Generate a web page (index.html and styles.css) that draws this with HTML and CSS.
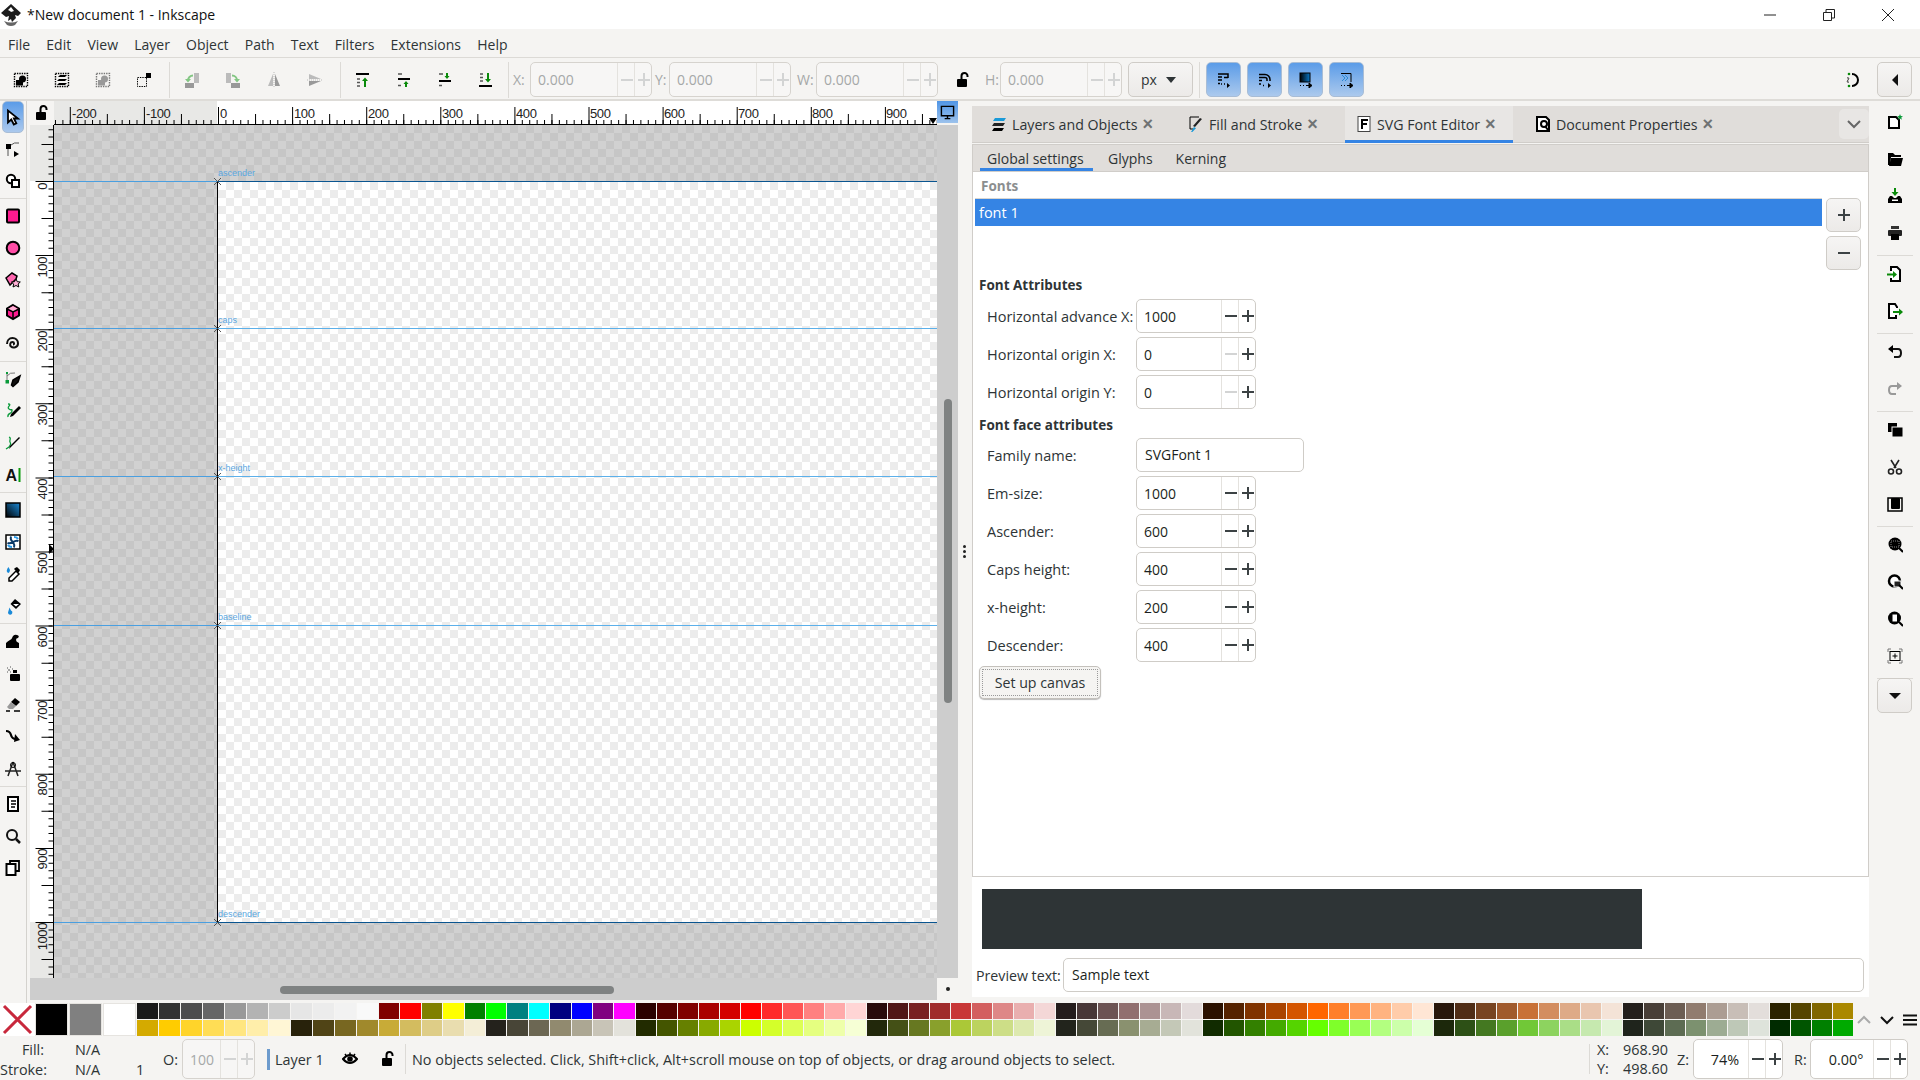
FILE: index.html
```html
<!DOCTYPE html>
<html lang="en">
<head>
<meta charset="utf-8">
<title>New document 1 - Inkscape</title>
<link rel="stylesheet" href="styles.css">
</head>
<body>
<svg class="defs" width="0" height="0">
  <symbol id="lock" viewBox="0 0 16 16"><rect x="2" y="7" width="10" height="8" rx="1"/><path d="M6.5 7V4a3 3 0 0 1 6 0v1" fill="none" stroke="#000" stroke-width="2"/></symbol>
  <symbol id="dots" viewBox="0 0 16 16"><rect x="1.5" y="1.5" width="13" height="13" fill="none" stroke="currentColor" stroke-width="1.4" stroke-dasharray="1.4 1"/></symbol>
  <symbol id="marg" viewBox="0 0 16 16"><path d="M2 2h10v4M8 5.5h4M2 5h4M2 8h4M2 11.500h2M5 12h1M8 12h1" fill="none" stroke="#000" stroke-width="1.500"/><path d="M8 13.500h5M11 11l3 2.500-3 2.500z"/></symbol>
  <symbol id="xm" viewBox="0 0 9 9"><path d="M1 1l7 7M8 1l-7 7" stroke="#555" fill="none"/></symbol>
</svg>
<div class="app">
  <header class="titlebar">
    <svg class="logo" viewBox="0 0 22 24"><path d="M11 1l10 9-3 3-3-1 1 3-4 4-1-3-3 2 1-5-3 1-5-4z" fill="#1c1c1c"/><path d="M8 7l3-3 3 4-3 1-1-1z" fill="#fff"/><path d="M4 18q7 3 14 0l-3 4q-4 2-8 0z" fill="#666"/></svg>
    <span class="title">*New document 1 - Inkscape</span>
    <div class="winctl">
      <svg viewBox="0 0 14 14"><path d="M1 7h12" stroke="#222" fill="none"/></svg>
      <svg viewBox="0 0 14 14"><path d="M1.500 4.500h8v8h-8zM4 4.500V1.500h8.500V10H9.500" stroke="#222" fill="none"/></svg>
      <svg viewBox="0 0 14 14"><path d="M1 1l12 12M13 1L1 13" stroke="#222" fill="none"/></svg>
    </div>
  </header>
  <nav class="menubar">
    <span>File</span><span>Edit</span><span>View</span><span>Layer</span><span>Object</span><span>Path</span><span>Text</span><span>Filters</span><span>Extensions</span><span>Help</span>
  </nav>
  <div class="toolbar">
    <div class="ti first"><svg viewBox="0 0 16 16" color="#000"><use href="#dots"/><circle cx="9.500" cy="7" r="3.500"/><rect x="3" y="8" width="7" height="5.500"/></svg></div>
    <div class="ti"><svg viewBox="0 0 16 16" color="#000"><use href="#dots"/><path d="M4 5l2-2h7l-2 2zM3 9l2-2h8l-2 2zM3 13l2-2h8l-2 2z"/></svg></div>
    <div class="ti"><svg viewBox="0 0 16 16" color="#777" fill="#999"><use href="#dots"/><circle cx="9.500" cy="7" r="3.500"/><rect x="3" y="8" width="7" height="5.500"/></svg></div>
    <div class="ti"><svg viewBox="0 0 16 16" color="#000"><rect x="1.500" y="5.500" width="9" height="9" fill="none" stroke="#000" stroke-dasharray="1.400 1"/><rect x="10" y="1" width="5" height="5"/></svg></div>
    <i class="vsep"></i>
    <div class="ti"><svg viewBox="0 0 16 16"><rect x="10" y="1" width="5" height="10" fill="#bbb"/><rect x="1" y="11" width="9" height="5" fill="#999"/><path d="M9 3.500A5 5 0 0 0 4 8.500" fill="none" stroke="#83c683" stroke-width="2"/><path d="M1 7h6l-3 3.500z" fill="#83c683"/></svg></div>
    <div class="ti"><svg viewBox="0 0 16 16"><rect x="1" y="1" width="5" height="10" fill="#bbb"/><rect x="6" y="11" width="9" height="5" fill="#999"/><path d="M7 3.500A5 5 0 0 1 12 8.500" fill="none" stroke="#83c683" stroke-width="2"/><path d="M9 7h6l-3 3.500z" fill="#83c683"/></svg></div>
    <div class="ti"><svg viewBox="0 0 16 16"><path d="M7 2L2 14h5z" fill="#bbb"/><path d="M9 2l5 12H9z" fill="#999"/><path d="M8 0v16" stroke="#bbb" stroke-dasharray="1 1"/></svg></div>
    <div class="ti"><svg viewBox="0 0 16 16"><path d="M2 2l12 5H2z" fill="#bbb"/><path d="M2 9h12L2 14z" fill="#999"/><path d="M0 8h16" stroke="#bbb" stroke-dasharray="1 1"/></svg></div>
    <i class="vsep"></i>
    <div class="ti"><svg viewBox="0 0 16 16"><path d="M1 2h13" stroke="#000" stroke-width="2"/><path d="M2 7h3M2 10.500h3M2 14h3" stroke="#555" stroke-width="1.500"/><path d="M10 15V8" stroke="#0a8a0a" stroke-width="2"/><path d="M7 9l3-3.500L13 9z" fill="#0a8a0a"/></svg></div>
    <div class="ti"><svg viewBox="0 0 16 16"><path d="M2 2h4M2 13.500h3" stroke="#555" stroke-width="1.500"/><path d="M2 7h12" stroke="#000" stroke-width="2"/><path d="M10 15v-4" stroke="#0a8a0a" stroke-width="2"/><path d="M7.500 12l2.500-3 2.500 3z" fill="#0a8a0a"/></svg></div>
    <div class="ti"><svg viewBox="0 0 16 16"><path d="M2 2h4M2 13.500h3" stroke="#555" stroke-width="1.500"/><path d="M2 9h12" stroke="#000" stroke-width="2"/><path d="M10 1v4" stroke="#0a8a0a" stroke-width="2"/><path d="M7.500 4l2.500 3 2.500-3z" fill="#0a8a0a"/></svg></div>
    <div class="ti"><svg viewBox="0 0 16 16"><path d="M1 14h13" stroke="#000" stroke-width="2"/><path d="M2 2h3M2 5.500h3M2 9h3" stroke="#555" stroke-width="1.500"/><path d="M10 1v7" stroke="#0a8a0a" stroke-width="2"/><path d="M7 7l3 3.500L13 7z" fill="#0a8a0a"/></svg></div>
    <i class="vsep fieldsep"></i>
    <label class="tl lx">X:</label>
    <div class="tf"><span class="tv">0.000</span><b class="m"></b><b class="p"></b></div>
    <label class="tl ly">Y:</label>
    <div class="tf"><span class="tv">0.000</span><b class="m"></b><b class="p"></b></div>
    <label class="tl lw">W:</label>
    <div class="tf"><span class="tv">0.000</span><b class="m"></b><b class="p"></b></div>
    <svg class="tlock" viewBox="0 0 16 16"><use href="#lock"/></svg>
    <label class="tl hl">H:</label>
    <div class="tf"><span class="tv">0.000</span><b class="m"></b><b class="p"></b></div>
    <div class="combo"><span>px</span><i></i></div>
    <i class="vsep"></i>
    <div class="bb"><svg viewBox="0 0 16 16"><use href="#marg"/></svg></div>
    <div class="bb"><svg viewBox="0 0 16 16"><path d="M2 2.500h6a5 5 0 0 1 5 5V9M2 5.500h6a2 2 0 0 1 2 2V9M2 8.500h3M2 12h2M6 13.500h1" fill="none" stroke="#000" stroke-width="1.500"/><path d="M8 13h5M11 11l3 2.500-3 2.500z"/></svg></div>
    <div class="bb"><svg viewBox="0 0 16 16"><defs><linearGradient id="gb"><stop offset="0" stop-color="#000"/><stop offset="1" stop-color="#0a78c8"/></linearGradient></defs><rect x="2" y="1" width="10" height="9" fill="url(#gb)" stroke="#000"/><path d="M2 13.500h1M5 13.500h1M8 13.500h5M11 11l3 2.500-3 2.500z" stroke="#000"/></svg></div>
    <div class="bb"><svg viewBox="0 0 16 16"><path d="M2 1.500h10V10" fill="none" stroke="#000"/><path d="M3 3l3 3-3 3M6 3l3 3-3 3" fill="none" stroke="#2a8ad4"/><path d="M2 13.500h1M5 13.500h1M8 13.500h5M11 11l3 2.500-3 2.500z" stroke="#000"/></svg></div>
    <svg class="snap" viewBox="0 0 16 16"><path d="M7 2a6 6 0 1 1 0 12" fill="none" stroke="#000" stroke-width="2"/><circle cx="4" cy="2" r="1.300" fill="#0a8a0a"/><circle cx="4" cy="14" r="1.300" fill="#0a8a0a"/><path d="M2 6q3-1 1 2t1 2" fill="none" stroke="#333"/></svg>
    <div class="sidebtn"><i class="tri-l"></i></div>
  </div>

  <main class="main">
    <aside class="tools">
      <div class="tb on"><svg viewBox="0 0 16 16"><path d="M3 1.500v12l3.300-3 2.500 5 2.500-1.200-2.400-4.800H13z" fill="#fff" stroke="#000" stroke-width="1.800"/></svg></div>
      <div class="tb"><svg viewBox="0 0 16 16"><rect x="1" y="3" width="5" height="5"/><path d="M6 4q3-3 8-2M3 8v7" fill="none" stroke="#555"/><path d="M9 10l5 3-5 3z"/></svg></div>
      <div class="tb"><svg viewBox="0 0 16 16"><circle cx="6" cy="6" r="4.200" fill="#fff" stroke="#000" stroke-width="2"/><rect x="7" y="7" width="7" height="7" fill="#fff" stroke="#000" stroke-width="2"/></svg></div>
      <i class="hsep"></i>
      <div class="tb"><svg viewBox="0 0 16 16"><rect x="2" y="1.500" width="12" height="13" rx="1" fill="#ff1a90" stroke="#000" stroke-width="2"/></svg></div>
      <div class="tb"><svg viewBox="0 0 16 16"><circle cx="8" cy="8" r="6.300" fill="#ff4da6" stroke="#000" stroke-width="2"/></svg></div>
      <div class="tb"><svg viewBox="0 0 16 16"><path d="M1 6l6-5 5 3-1 3-6 6z" fill="#ff66b0" stroke="#000" stroke-width="1.500"/><path d="M11 7l1.300 2.700 3 .3-2.200 2 .7 3-2.800-1.500L8 15l.7-3-2.200-2 3-.3z" fill="#ffb0d5" stroke="#000"/></svg></div>
      <div class="tb"><svg viewBox="0 0 16 16"><path d="M8 1l6 3.500v7L8 15l-6-3.500v-7z" fill="#ff1a90" stroke="#000" stroke-width="2"/><path d="M3 5l5 3 5-3-5-3z" fill="#ffb0d5"/><path d="M2 5l6 3 6-3M8 8v7" stroke="#000" fill="none" stroke-width="1.500"/></svg></div>
      <div class="tb"><svg viewBox="0 0 16 16"><path d="M8 8.500c1.500 0 1.500-2.500-.5-2.500C5 6 4.500 9 6 10.500c2 2 7 1 7-3C13 4 10.500 2 7.500 2 4 2 2 5 2 8" fill="none" stroke="#111" stroke-width="2"/></svg></div>
      <i class="hsep"></i>
      <div class="tb"><svg viewBox="0 0 16 16"><rect x="0.500" y="9" width="3.500" height="3.500" fill="#0a9a3a"/><rect x="1" y="1" width="2" height="2" fill="#0a9a3a"/><path d="M2 3v6M2 5q3-4 8-3" stroke="#777" fill="none"/><path d="M15 5l-2 6-5 4.500-1.500-1.500L8 9z" stroke="#000" stroke-width="1.500" fill="#111"/></svg></div>
      <div class="tb"><svg viewBox="0 0 16 16"><path d="M3 1c5 0-2 3 1 5s3-1 3 2-5 2-4 6" fill="none" stroke="#0a9a3a" stroke-width="1.300"/><path d="M14 3l2 2-8 8-3 1 1-3z"/></svg></div>
      <div class="tb"><svg viewBox="0 0 16 16"><path d="M4 2c3 1 0 3 1 5s1 2-1 5l-3 2" fill="none" stroke="#0a9a3a" stroke-width="1.300"/><path d="M15 3L6 12l-2 2 1-3 9-9z"/></svg></div>
      <div class="tb"><svg viewBox="0 0 16 16"><text x="0.500" y="13.500" class="atext">A</text><rect x="13.500" y="1" width="2" height="14" fill="#0a9a0a"/></svg></div>
      <i class="hsep"></i>
      <div class="tb"><svg viewBox="0 0 16 16"><defs><linearGradient id="gg" x1="0" y1="1" x2="1" y2="0"><stop offset="0" stop-color="#000"/><stop offset="1" stop-color="#1a8ad8"/></linearGradient></defs><rect x="1" y="1" width="14" height="14" fill="url(#gg)" stroke="#000" stroke-width="1.500"/></svg></div>
      <div class="tb"><svg viewBox="0 0 16 16"><rect x="1" y="1" width="14" height="14" fill="#fff" stroke="#000" stroke-width="1.500"/><path d="M8 8Q5 6 6 2.500M8 8q3-2 5.500-1M8 8q2 3 1 5.500M8 8q-3 2-5.500 1" fill="none" stroke="#0a3a68" stroke-width="2"/><path d="M9 3q3 0 4 2M3 11q1 2 4 2" fill="none" stroke="#2a9ae8" stroke-width="2"/></svg></div>
      <div class="tb"><svg viewBox="0 0 16 16"><path d="M3.500 1q-3 4-1 5.500T5 4z" fill="#1a8ad8"/><path d="M11 5l3 3-7 7H4v-3z" fill="#fff" stroke="#000" stroke-width="1.500"/><path d="M10 2l2-1 3 3-1 2 -1 1-4-4z"/></svg></div>
      <div class="tb"><svg viewBox="0 0 16 16"><path d="M3 14.500a2.200 2.200 0 1 0 3-2L4.500 9.500z" fill="#1a8ad8"/><path d="M10 1l6 5-5 5-5.500-5z"/><path d="M8 6l3 2.500L14 6z" fill="#fff"/></svg></div>
      <i class="hsep"></i>
      <div class="tb"><svg viewBox="0 0 16 16"><path d="M1 15V10q2-2 4-3t3-4q2-2 4-1 3 1 1 3-2 0-2 2 0 2 3 3v5z"/></svg></div>
      <div class="tb"><svg viewBox="0 0 16 16"><path d="M2 3h1M5 2h1M3 5h2M7 4h1M2 7h1M5 7h1" stroke="#888" stroke-width="1.500"/><rect x="5" y="9" width="10" height="7" rx="1"/><rect x="8" y="5" width="4" height="3"/></svg></div>
      <div class="tb"><svg viewBox="0 0 16 16"><path d="M10 1l5 4-4 4-5-4z"/><path d="M6 5l5 4-3 3H4l-2-2z" fill="#999"/><path d="M1 14h4M9 14h6" stroke="#000" stroke-width="1.500"/></svg></div>
      <div class="tb"><svg viewBox="0 0 16 16"><path d="M1 2q4 0 5 4t5 4" fill="none" stroke="#000" stroke-width="2.200"/><path d="M10 5l5 6-6 2z"/></svg></div>
      <div class="tb"><svg viewBox="0 0 16 16"><path d="M8 1L3 15M8 1l5 14M0 10h16" fill="none" stroke="#222" stroke-width="1.500"/><circle cx="8" cy="4" r="2.500" fill="none" stroke="#000"/></svg></div>
      <i class="hsep"></i>
      <div class="tb"><svg viewBox="0 0 16 16"><path d="M3 1h10v14H3z" fill="#fff" stroke="#000" stroke-width="2"/><path d="M6 5h5M6 8h5M6 11h4" stroke="#000" stroke-width="1.300"/></svg></div>
      <div class="tb"><svg viewBox="0 0 16 16"><circle cx="7" cy="7" r="5" fill="none" stroke="#111" stroke-width="2"/><path d="M11 11l4 4" stroke="#111" stroke-width="2.500"/></svg></div>
      <div class="tb"><svg viewBox="0 0 16 16"><path d="M5 3V1h9v10h-3" fill="none" stroke="#000" stroke-width="1.800"/><rect x="1.500" y="4" width="9" height="11" fill="#fff" stroke="#000" stroke-width="2"/></svg></div>
    </aside>

    <section class="workspace">
      <div class="corner"><svg viewBox="0 0 16 16"><use href="#lock"/></svg></div>
      <svg class="hruler" width="883" height="24">
        <rect width="163" height="24" fill="#e8e8e6"/>
        <line x1="0.980" x2="883" y1="21.500" y2="21.500" class="tk" stroke-width="5" stroke-dasharray="1 6.410"/>
        <line x1="52.850" x2="883" y1="18.500" y2="18.500" class="tk" stroke-width="11" stroke-dasharray="1 73.100"/>
        <line x1="15.800" x2="883" y1="15" y2="15" class="tk" stroke-width="18" stroke-dasharray="1 73.100"/>
        <line x1="0" x2="883" y1="23.500" y2="23.500" class="tk" stroke-width="1"/>
        <g class="rt"><text x="18" y="17">-200</text><text x="92" y="17">-100</text><text x="166" y="17">0</text><text x="240" y="17">100</text><text x="314" y="17">200</text><text x="388" y="17">300</text><text x="462" y="17">400</text><text x="536" y="17">500</text><text x="610" y="17">600</text><text x="684" y="17">700</text><text x="758" y="17">800</text><text x="832" y="17">900</text></g>
        <path d="M875 17h8l-4 6z"/>
      </svg>
      <div class="zoomcorr"><svg viewBox="0 0 16 16"><path d="M1.500 1.500h13v10h-13zM5 14.500h6M8 12v2" fill="none" stroke="#000" stroke-width="1.500"/></svg></div>
      <svg class="vruler" width="24" height="853">
        <rect width="24" height="56" fill="#e8e8e6"/>
        <rect y="797" width="24" height="56" fill="#e8e8e6"/>
        <line x1="21" x2="21" y1="4.130" y2="853" class="tk" stroke-width="5" stroke-dasharray="1 6.410"/>
        <line x1="17" x2="17" y1="18.950" y2="853" class="tk" stroke-width="11" stroke-dasharray="1 73.100"/>
        <line x1="14" x2="14" y1="56" y2="853" class="tk" stroke-width="17" stroke-dasharray="1 73.100"/>
        <line x1="23.500" x2="23.500" y1="0" y2="853" class="tk" stroke-width="1"/>
        <g class="rt">
          <text transform="translate(17 58) rotate(-90)" text-anchor="end">0</text>
          <text transform="translate(17 132) rotate(-90)" text-anchor="end">100</text>
          <text transform="translate(17 206) rotate(-90)" text-anchor="end">200</text>
          <text transform="translate(17 280) rotate(-90)" text-anchor="end">300</text>
          <text transform="translate(17 354) rotate(-90)" text-anchor="end">400</text>
          <text transform="translate(17 428) rotate(-90)" text-anchor="end">500</text>
          <text transform="translate(17 502) rotate(-90)" text-anchor="end">600</text>
          <text transform="translate(17 576) rotate(-90)" text-anchor="end">700</text>
          <text transform="translate(17 650) rotate(-90)" text-anchor="end">800</text>
          <text transform="translate(17 724) rotate(-90)" text-anchor="end">900</text>
          <text transform="translate(17 798) rotate(-90)" text-anchor="end">1000</text>
        </g>
        <path d="M19 419l5 5-5 5z"/>
      </svg>
      <div class="canvas">
        <div class="page"></div>
        <i class="guide g-a"></i><i class="guide g-c"></i><i class="guide g-x"></i><i class="guide g-b"></i><i class="guide g-d"></i>
        <span class="gl l-a">ascender</span><span class="gl l-c">caps</span><span class="gl l-x">x-height</span><span class="gl l-b">baseline</span><span class="gl l-d">descender</span>
        <svg class="xm x-a"><use href="#xm"/></svg><svg class="xm x-c"><use href="#xm"/></svg><svg class="xm x-x"><use href="#xm"/></svg><svg class="xm x-b"><use href="#xm"/></svg><svg class="xm x-d"><use href="#xm"/></svg>
      </div>
      <div class="vscroll"><i></i></div>
      <div class="hscroll"><i></i></div>
      <div class="sc-corner"><i></i></div>
    </section>

    <div class="gutter"><i></i><i></i><i></i></div>

    <section class="dock">
      <div class="tabs">
        <div class="tab t1"><svg viewBox="0 0 16 16"><path d="M4 2h11l-2 3H2z" fill="#1a9ad8"/><path d="M3 7h11l-2 3H1z" fill="#222"/><path d="M3 12h10l-2 3H1z"/></svg><span>Layers and Objects</span><em>×</em></div>
        <div class="tab t2"><svg viewBox="0 0 16 16"><path d="M11 1H2v12h3" fill="none" stroke="#000"/><path d="M14 3L7 11l-2-1 7-8z" fill="#222"/><path d="M6 11l-3 5 1 .3 4-4z" fill="#1a9ad8"/></svg><span>Fill and Stroke</span><em>×</em></div>
        <div class="tab t3 act"><svg viewBox="0 0 16 16"><rect x="2" y="0.500" width="12" height="15" fill="#fff" stroke="#444"/><path d="M5 3h7v2H7v2h4v2H7v4H5z"/></svg><span>SVG Font Editor</span><em>×</em></div>
        <div class="tab t4"><svg viewBox="0 0 16 16"><path d="M2 1h9l3 3v11H2z" fill="#fff" stroke="#000" stroke-width="2"/><circle cx="9" cy="8" r="3" fill="none" stroke="#000" stroke-width="2"/><path d="M10 10l3 4" stroke="#000" stroke-width="2"/></svg><span>Document Properties</span><em>×</em></div>
        <div class="tabmenu"><svg viewBox="0 0 16 16"><path d="M2 5l6 6 6-6" fill="none" stroke="#666" stroke-width="2"/></svg></div>
      </div>
      <div class="nb">
        <div class="subtabs"><span class="sel">Global settings</span><span>Glyphs</span><span>Kerning</span></div>
        <div class="scroller">
          <div class="fonts">
            <div class="list">
              <div class="lh">Fonts</div>
              <div class="lrow">font 1</div>
            </div>
            <div class="addrem"><div class="sq"><b class="p dark"></b></div><div class="sq"><b class="m dark"></b></div></div>
          </div>
          <h3>Font Attributes</h3>
          <div class="row"><label>Horizontal advance X:</label><div class="spin"><span>1000</span><b class="m dark"></b><b class="p dark"></b></div></div>
          <div class="row"><label>Horizontal origin X:</label><div class="spin"><span>0</span><b class="m"></b><b class="p dark"></b></div></div>
          <div class="row"><label>Horizontal origin Y:</label><div class="spin"><span>0</span><b class="m"></b><b class="p dark"></b></div></div>
          <h3 class="h2">Font face attributes</h3>
          <div class="row"><label>Family name:</label><div class="entry">SVGFont 1</div></div>
          <div class="row"><label>Em-size:</label><div class="spin"><span>1000</span><b class="m dark"></b><b class="p dark"></b></div></div>
          <div class="row"><label>Ascender:</label><div class="spin"><span>600</span><b class="m dark"></b><b class="p dark"></b></div></div>
          <div class="row"><label>Caps height:</label><div class="spin"><span>400</span><b class="m dark"></b><b class="p dark"></b></div></div>
          <div class="row"><label>x-height:</label><div class="spin"><span>200</span><b class="m dark"></b><b class="p dark"></b></div></div>
          <div class="row"><label>Descender:</label><div class="spin"><span>400</span><b class="m dark"></b><b class="p dark"></b></div></div>
          <div class="setup"><span>Set up canvas</span></div>
        </div>
        <div class="preview">
          <div class="darkbox"></div>
          <div class="ptext"><label>Preview text:</label><div class="pentry">Sample text</div></div>
        </div>
      </div>
    </section>

    <aside class="cmds">
      <svg class="c c1" viewBox="0 0 16 16"><path d="M2 3h7l3 3v8H2z" fill="#fff" stroke="#000" stroke-width="2"/><path d="M13 0l.8 2 2.200.2-1.700 1.400.6 2.200-1.900-1.200-1.900 1.200.6-2.200-1.700-1.400 2.200-.2z" fill="#0a9a3a"/></svg>
      <svg class="c" viewBox="0 0 16 16"><path d="M1 2h5l2 2h6v2H4l-1 8H1z"/><path d="M4 7h12l-2 8H2z"/></svg>
      <svg class="c" viewBox="0 0 16 16"><path d="M8 0v5" stroke="#0a8a0a" stroke-width="2"/><path d="M4.500 4L8 8l3.500-4z" fill="#0a8a0a"/><path d="M3 8h2l2 2h2l2-2h2l2 3v4H1v-4z"/><rect x="5" y="11.500" width="6" height="1.500" fill="#fff"/></svg>
      <svg class="c" viewBox="0 0 16 16"><rect x="4" y="1" width="8" height="3" fill="#333"/><rect x="1" y="5" width="14" height="6" rx="1" fill="#222"/><rect x="4" y="9" width="8" height="6"/></svg>
      <i class="chs"></i>
      <svg class="c" viewBox="0 0 16 16"><path d="M4 5V1h6l3 3v11H4v-3" fill="#fff" stroke="#000" stroke-width="2"/><path d="M0 8.500h7" stroke="#0a8a0a" stroke-width="2"/><path d="M6 5l4 3.500L6 12z" fill="#0a8a0a"/></svg>
      <svg class="c" viewBox="0 0 16 16"><path d="M10 5V4L8 1H2v14h7v-3" fill="#fff" stroke="#000" stroke-width="2"/><path d="M6 9h7" stroke="#0a8a0a" stroke-width="2"/><path d="M12 5.500L16 9l-4 3.500z" fill="#0a8a0a"/></svg>
      <i class="chs"></i>
      <svg class="c" viewBox="0 0 16 16"><path d="M2 5h9q3 0 3 4t-3 4H7" fill="none" stroke="#111" stroke-width="2"/><path d="M6 1L1 5l5 4z"/></svg>
      <svg class="c" viewBox="0 0 16 16"><path d="M14 5H5Q2 5 2 9t3 4h4" fill="none" stroke="#999" stroke-width="2"/><path d="M10 1l5 4-5 4z" fill="#999"/></svg>
      <i class="chs"></i>
      <svg class="c" viewBox="0 0 16 16"><rect x="1" y="1" width="9" height="9"/><rect x="5" y="5" width="11" height="10" stroke="#f5f4f2"/></svg>
      <svg class="c" viewBox="0 0 16 16"><path d="M4 1l5 8M12 1L7 9" stroke="#222" stroke-width="1.600"/><circle cx="4" cy="12.500" r="2.500" fill="none" stroke="#222" stroke-width="1.600"/><circle cx="12" cy="12.500" r="2.500" fill="none" stroke="#222" stroke-width="1.600"/></svg>
      <svg class="c" viewBox="0 0 16 16"><path d="M1 2h14v13H1z" fill="none" stroke="#000" stroke-width="1.500"/><rect x="4" y="2" width="9" height="11" rx="1"/></svg>
      <i class="chs"></i>
      <svg class="c" viewBox="0 0 16 16"><circle cx="8" cy="7" r="6.500"/><rect x="4" y="4" width="8" height="6" fill="none" stroke="#888" stroke-dasharray="1 1"/><path d="M12 11l4 4" stroke="#000" stroke-width="2"/></svg>
      <svg class="c" viewBox="0 0 16 16"><circle cx="7.500" cy="7" r="5.500" fill="#fff" stroke="#000" stroke-width="2.500"/><rect x="7" y="7" width="7" height="6" fill="#222" stroke="#fff"/><path d="M12 11l4 4" stroke="#000" stroke-width="2"/></svg>
      <svg class="c" viewBox="0 0 16 16"><circle cx="7.500" cy="7" r="6.500"/><rect x="5" y="3" width="5.500" height="8" fill="#fff" stroke="#000"/><path d="M12 11l4 4" stroke="#000" stroke-width="2"/></svg>
      <svg class="c" viewBox="0 0 16 16"><path d="M1 4V1h3M12 1h3v3M15 12v3h-3M4 15H1v-3" fill="none" stroke="#777"/><rect x="3" y="3.500" width="10" height="9" fill="none" stroke="#000"/><path d="M8 5.500v5M5.500 8h5" stroke="#000"/></svg>
      <i class="chs"></i>
      <div class="sidebtn more"><i class="tri-d"></i></div>
    </aside>
  </main>

  <div class="palette">
    <div class="none"><svg viewBox="0 0 33 33"><path d="M3 3l27 27M30 3L3 30" stroke="#c8283c" stroke-width="3" fill="none"/></svg></div>
    <i class="big" style="background:#000"></i><i class="big" style="background:#808080"></i><i class="big" style="background:#fff"></i>
    <div class="swatches">
      <i style="background:#1a1a1a"></i><i style="background:#d4aa00"></i><i style="background:#333"></i><i style="background:#fc0"></i><i style="background:#4d4d4d"></i><i style="background:#ffd42a"></i><i style="background:#666"></i><i style="background:#fd5"></i><i style="background:#999"></i><i style="background:#ffe680"></i><i style="background:#b3b3b3"></i><i style="background:#fea"></i><i style="background:#ccc"></i><i style="background:#fff6d5"></i><i style="background:#e6e6e6"></i><i style="background:#28220b"></i><i style="background:#ececec"></i><i style="background:#504416"></i><i style="background:#f2f2f2"></i><i style="background:#786721"></i><i style="background:#f9f9f9"></i><i style="background:#a0892c"></i>
      <i style="background:#800000"></i><i style="background:#c8ab37"></i><i style="background:#f00"></i><i style="background:#d3bc5f"></i><i style="background:#808000"></i><i style="background:#decd87"></i><i style="background:#ff0"></i><i style="background:#e9ddaf"></i><i style="background:#008000"></i><i style="background:#f4eed7"></i><i style="background:#0f0"></i><i style="background:#24221c"></i><i style="background:#008080"></i><i style="background:#484537"></i><i style="background:#0ff"></i><i style="background:#6c6753"></i><i style="background:#000080"></i><i style="background:#918a6f"></i><i style="background:#00f"></i><i style="background:#aca793"></i><i style="background:#800080"></i><i style="background:#c8c4b7"></i><i style="background:#f0f"></i><i style="background:#e3e2db"></i>
      <i style="background:#2b0000"></i><i style="background:#222b00"></i><i style="background:#500"></i><i style="background:#445500"></i><i style="background:#800000"></i><i style="background:#668000"></i><i style="background:#a00"></i><i style="background:#88aa00"></i><i style="background:#d40000"></i><i style="background:#aad400"></i><i style="background:#f00"></i><i style="background:#cf0"></i><i style="background:#ff2a2a"></i><i style="background:#d4ff2a"></i><i style="background:#f55"></i><i style="background:#df5"></i><i style="background:#ff8080"></i><i style="background:#e5ff80"></i><i style="background:#faa"></i><i style="background:#efa"></i><i style="background:#ffd5d5"></i><i style="background:#f6ffd5"></i>
      <i style="background:#280b0b"></i><i style="background:#22280b"></i><i style="background:#501616"></i><i style="background:#445016"></i><i style="background:#782121"></i><i style="background:#677821"></i><i style="background:#a02c2c"></i><i style="background:#89a02c"></i><i style="background:#c83737"></i><i style="background:#abc837"></i><i style="background:#d35f5f"></i><i style="background:#bcd35f"></i><i style="background:#de8787"></i><i style="background:#cdde87"></i><i style="background:#e9afaf"></i><i style="background:#dde9af"></i><i style="background:#f4d7d7"></i><i style="background:#eef4d7"></i>
      <i style="background:#241c1c"></i><i style="background:#22241c"></i><i style="background:#483737"></i><i style="background:#454837"></i><i style="background:#6c5353"></i><i style="background:#676c53"></i><i style="background:#916f6f"></i><i style="background:#8a916f"></i><i style="background:#ac9393"></i><i style="background:#a7ac93"></i><i style="background:#c8b7b7"></i><i style="background:#c4c8b7"></i><i style="background:#e3dbdb"></i><i style="background:#e2e3db"></i>
      <i style="background:#2b1100"></i><i style="background:#112b00"></i><i style="background:#520"></i><i style="background:#225500"></i><i style="background:#803300"></i><i style="background:#338000"></i><i style="background:#a40"></i><i style="background:#44aa00"></i><i style="background:#d45500"></i><i style="background:#55d400"></i><i style="background:#f60"></i><i style="background:#6f0"></i><i style="background:#ff7f2a"></i><i style="background:#7fff2a"></i><i style="background:#f95"></i><i style="background:#9f5"></i><i style="background:#ffb380"></i><i style="background:#b3ff80"></i><i style="background:#fca"></i><i style="background:#cfa"></i><i style="background:#ffe6d5"></i><i style="background:#e5ffd5"></i>
      <i style="background:#28170b"></i><i style="background:#1c280b"></i><i style="background:#502d16"></i><i style="background:#2d5016"></i><i style="background:#784421"></i><i style="background:#447821"></i><i style="background:#a05a2c"></i><i style="background:#5aa02c"></i><i style="background:#c87137"></i><i style="background:#71c837"></i><i style="background:#d38d5f"></i><i style="background:#8dd35f"></i><i style="background:#deaa87"></i><i style="background:#aade87"></i><i style="background:#e9c6af"></i><i style="background:#c6e9af"></i><i style="background:#f4e3d7"></i><i style="background:#e3f4d7"></i>
      <i style="background:#241f1c"></i><i style="background:#1f241c"></i><i style="background:#483e37"></i><i style="background:#3e4837"></i><i style="background:#6c5d53"></i><i style="background:#5d6c53"></i><i style="background:#917c6f"></i><i style="background:#7c916f"></i><i style="background:#ac9d93"></i><i style="background:#9dac93"></i><i style="background:#c8beb7"></i><i style="background:#bec8b7"></i><i style="background:#e3dedb"></i><i style="background:#dee3db"></i>
      <i style="background:#2b2200"></i><i style="background:#002b00"></i><i style="background:#540"></i><i style="background:#050"></i><i style="background:#806600"></i><i style="background:#008000"></i><i style="background:#a80"></i><i style="background:#0a0"></i>
    </div>
    <div class="palctl">
      <svg viewBox="0 0 16 16"><path d="M2 11l6-6 6 6" fill="none" stroke="#aaa" stroke-width="2"/></svg>
      <svg viewBox="0 0 16 16"><path d="M2 5l6 6 6-6" fill="none" stroke="#111" stroke-width="2"/></svg>
      <svg viewBox="0 0 16 16"><path d="M1 3.500h14M1 8h14M1 12.500h14" stroke="#111" stroke-width="2"/></svg>
    </div>
  </div>

  <footer class="status">
    <div class="fs">
      <span class="fl">Fill:</span><span class="fv">N/A</span><span></span>
      <span class="fl">Stroke:</span><span class="fv">N/A</span><span class="fw">1</span>
    </div>
    <label class="ol">O:</label>
    <div class="tf op"><span class="tv">100</span><b class="m"></b><b class="p"></b></div>
    <i class="layerbar"></i>
    <span class="layer">Layer 1</span>
    <svg class="eye" viewBox="0 0 16 16"><path d="M1 8q7-8 14 0-7 8-14 0z" fill="#fff" stroke="#000" stroke-width="2"/><circle cx="8" cy="8" r="2.800"/><path d="M3 3l1.500 2M8 1.500V4M13 3l-1.500 2" stroke="#000" stroke-width="1.500"/></svg>
    <svg class="slock" viewBox="0 0 16 16"><use href="#lock"/></svg>
    <i class="vsep st"></i>
    <span class="msg">No objects selected. Click, Shift+click, Alt+scroll mouse on top of objects, or drag around objects to select.</span>
    <i class="vsep st2"></i>
    <div class="coords"><span>X:</span><span class="cv">968.90</span><span>Y:</span><span class="cv">498.60</span></div>
    <label class="zl">Z:</label>
    <div class="sf z"><span>74%</span><b class="m dark"></b><b class="p dark"></b></div>
    <label class="rl">R:</label>
    <div class="sf r"><span>0.00°</span><b class="m dark"></b><b class="p dark"></b></div>
  </footer>
</div>
</body>
</html>
```

FILE: styles.css
```css
* { box-sizing: border-box; }
html, body { margin: 0; height: 100%; }
body {
  font-family: "Open Sans", "Noto Sans", "Liberation Sans", sans-serif;
  font-size: 14px;
  color: #2e3436;
  overflow: hidden;
  background: #f5f4f2;
}
.defs { position: absolute; }
.app { display: flex; flex-direction: column; height: 1080px; width: 1920px; }

/* title bar */
.titlebar { height: 29px; background: #fff; display: flex; align-items: center; color: #111; }
.logo { width: 22px; height: 24px; margin-right: 5px; flex: none; }
.title { font-size: 14px; flex: 1; }
.winctl { display: flex; margin-right: 25px; gap: 45px; }
.winctl svg { width: 14px; height: 14px; }

/* menu */
.menubar { height: 29px; display: flex; align-items: center; padding: 2px 0 0 8px; border-bottom: 1px solid #dcdad6; font-size: 14px; flex: none; }
.menubar span { margin-right: 16.200px; }

/* top toolbar */
.toolbar { height: 43px; display: flex; align-items: center; flex: none; border-bottom: 2px solid #dedcd8; padding-top: 2px; }
.ti { width: 18px; height: 18px; margin-right: 23px; flex: none; }
.ti.first { margin-left: 12px; }
.ti svg { display: block; width: 16px; height: 16px; margin: 1px; }
.vsep { width: 1px; height: 36px; background: #dcdad6; flex: none; }
.ti + .vsep { margin-left: -7px; margin-right: 13px; }
.ti + .vsep.fieldsep { margin-left: -10px; margin-right: 0; }
.tl { flex: none; color: #a5a8a8; font-size: 14px; }
.lx { width: 21px; padding-left: 4px; }
.ly { width: 14px; }
.lw { width: 22px; padding-left: 3px; }
.tl.hl { margin-left: 14px; width: 15px; }
.tf { width: 122px; height: 35px; border: 1px solid #d6d3ce; border-radius: 5px; background: #f7f6f5; display: flex; align-items: center; flex: none; }
.toolbar .tf { margin-right: 3px; }
.tv { flex: 1; padding-left: 7px; color: #a5a8a8; font-size: 14px; }
.m, .p { position: relative; width: 17px; height: 100%; border-left: 1px solid #e4e2de; flex: none; display: block; }
.m::before, .p::before { content: ""; position: absolute; left: 2.500px; top: 50%; margin-top: -1px; width: 12.500px; height: 2px; background: #d3d4d4; }
.p::after { content: ""; position: absolute; left: 7.750px; top: 50%; margin-top: -6.250px; width: 2px; height: 12.500px; background: #d3d4d4; }
.dark::before, .dark::after { background: #3c4244; }
.tlock { width: 16px; height: 16px; margin-left: 14px; flex: none; }
.combo { width: 65px; height: 35px; border: 1px solid #cfccc7; border-radius: 5px; background: linear-gradient(#f6f5f4, #eceae8); margin-left: 3px; margin-right: 6px; display: flex; align-items: center; padding-left: 12px; flex: none; }
.combo span { flex: 1; }
.combo i { width: 0; height: 0; border: 5px solid transparent; border-top: 6px solid #2e3436; border-bottom: 0; margin-right: 16px; }
.bb { width: 35px; height: 35px; border: 1px solid #a8bdd6; border-radius: 5px; background: linear-gradient(#5b9ce8, #abc9ed); display: flex; align-items: center; justify-content: center; margin-left: 6px; flex: none; }
.bb svg { width: 16px; height: 16px; }
.snap { width: 16px; height: 16px; margin-left: 481px; flex: none; }
.sidebtn { width: 35px; height: 35px; border: 1px solid #cfccc7; border-radius: 5px; background: linear-gradient(#f6f5f4, #eceae8); display: flex; align-items: center; justify-content: center; margin-left: 16px; flex: none; }
.tri-l { width: 0; height: 0; border: 6px solid transparent; border-right: 6px solid #111; border-left: 0; }
.tri-d { width: 0; height: 0; border: 6px solid transparent; border-top: 6px solid #111; border-bottom: 0; }

/* main */
.main { height: 902px; display: flex; flex: none; }
.tools { width: 27px; border-right: 1px solid #d4d2ce; display: flex; flex-direction: column; align-items: stretch; flex: none; }
.tb { height: 32px; display: flex; align-items: center; justify-content: center; margin: 0 2px; flex: none; }
.tb.on { background: linear-gradient(#5b9ce8, #abc9ed); border: 1px solid #a8bdd6; border-radius: 5px; }
.tb svg { width: 16px; height: 16px; overflow: visible; }
.hsep { height: 1px; background: #dcdad6; margin: 1px 0; flex: none; }
.atext { font: bold 16px "Liberation Sans", sans-serif; fill: #111; }

.workspace { width: 931px; padding-left: 3px; display: grid; grid-template-columns: 24px 883px 21px; grid-template-rows: 24px 853px 22px; flex: none; }
.corner { display: flex; align-items: center; justify-content: center; }
.corner svg { width: 16px; height: 16px; }
.hruler, .vruler { display: block; background: #fff; }
.tk { stroke: #000; fill: none; }
.rt { font: 13px "Liberation Sans", sans-serif; fill: #222; letter-spacing: -0.4px; }
.zoomcorr { height: 22px; background: linear-gradient(#4f95e6, #9cc2ec); display: flex; justify-content: center; align-items: center; }
.zoomcorr svg { width: 15px; height: 15px; }
.canvas { position: relative; overflow: hidden; background: repeating-conic-gradient(#c6c6c6 0 25%, #d1d1d1 0 50%) 0 0 / 16px 16px; }
.page { position: absolute; left: 163px; top: 56px; right: -4px; height: 742px; border: 1px solid #000; background: repeating-conic-gradient(#ececec 0 25%, #fff 0 50%) 0 0 / 16px 16px; }
.guide { position: absolute; left: 0; right: 0; height: 1px; background: linear-gradient(to right, #4a9fe0 164px, #5cb0ea 164px); }
.g-a { top: 56px; background: linear-gradient(to right, #4a9fe0 164px, #0a5590 164px); }
.g-c { top: 203px; }
.g-x { top: 351px; }
.g-b { top: 500px; }
.g-d { top: 797px; background: linear-gradient(to right, #4a9fe0 164px, #0a5590 164px); }
.gl { position: absolute; left: 164px; font: 9px "Liberation Sans", sans-serif; color: #5aa6e0; line-height: 11px; }
.l-a { top: 43px; } .l-c { top: 190px; } .l-x { top: 338px; } .l-b { top: 487px; } .l-d { top: 784px; }
.xm { position: absolute; left: 159px; width: 9px; height: 9px; }
.x-a { top: 52px; } .x-c { top: 199px; } .x-x { top: 347px; } .x-b { top: 496px; } .x-d { top: 793px; }
.vscroll { background: #cdcdcd; position: relative; }
.vscroll i { position: absolute; left: 7px; top: 274px; width: 8px; height: 304px; background: #7f8282; border-radius: 4px; }
.hscroll { grid-column: 1 / span 2; background: #cdcdcd; position: relative; }
.hscroll i { position: absolute; left: 250px; top: 8px; width: 334px; height: 8px; background: #7f8282; border-radius: 4px; }
.sc-corner { display: flex; align-items: center; justify-content: center; }
.sc-corner i { width: 4px; height: 4px; border-radius: 50%; background: #222; }

.gutter { width: 14px; display: flex; flex-direction: column; align-items: center; justify-content: center; gap: 2px; padding-right: 1px; flex: none; padding-bottom: 2px; }
.gutter i { width: 3px; height: 3px; background: #222; border-radius: 50%; }

/* dock */
.dock { width: 897px; padding-top: 5px; display: flex; flex-direction: column; flex: none; padding-bottom: 6px; }
.tabs { height: 37px; background: #e0ddda; display: flex; align-items: stretch; border-bottom: 1px solid #d0cdc9; position: relative; flex: none; }
.tab { display: flex; align-items: center; font-size: 14.200px; }
.tab svg { width: 16px; height: 16px; margin-right: 5px; flex: none; }
.tab span { white-space: nowrap; }
.tab em { font: bold 18px "Liberation Sans", sans-serif; color: #6f7374; margin-left: 5px; }
.t1 { padding-left: 19px; width: 177px; }
.t2 { width: 196px; padding-left: 39px; }
.t3 { width: 168px; padding-left: 11px; }
.t4 { padding-left: 22px; }
.act { background: #e8e6e4; border-bottom: 3px solid #3584e4; margin-bottom: -1px; padding-top: 2px; }
.tabmenu { position: absolute; right: 0; top: 3px; width: 30px; height: 30px; background: #e8e6e4; border-radius: 5px; display: flex; align-items: center; justify-content: center; }
.tabmenu svg { width: 16px; height: 16px; }
.nb { flex: 1; margin-top: 1px; display: flex; flex-direction: column; min-height: 0; }
.subtabs { height: 28px; background: #e0ddda; border: 1px solid #d0cdc9; display: flex; padding-left: 7px; align-items: stretch; flex: none; }
.subtabs span { padding: 0 8px 0 7px; line-height: 27px; margin-right: 8px; }
.subtabs .sel { border-bottom: 3px solid #3584e4; width: 113px; margin-right: 8px; }
.scroller { height: 705px; background: #fff; border-left: 1px solid #d0cdc9; border-right: 1px solid #d0cdc9; border-bottom: 1px solid #d0cdc9; flex: none; }
.fonts { display: flex; height: 98px; padding-left: 2px; }
.list { width: 847px; flex: none; }
.lh { height: 27px; border-bottom: 1px solid #d8d6d2; font-weight: 700; color: #8b8e8f; font-size: 13.500px; padding-left: 6px; line-height: 29px; }
.lrow { height: 27px; background: #3584e4; color: #fff; padding-left: 4px; line-height: 28px; font-size: 14.500px; }
.addrem { margin-left: 4px; padding-top: 26px; display: flex; flex-direction: column; gap: 4px; }
.sq { width: 35px; height: 34px; border: 1px solid #cfccc7; border-radius: 5px; background: linear-gradient(#f6f5f4, #eceae8); display: flex; justify-content: center; align-items: center; }
.sq b { border: 0; height: 18px; }
h3 { margin: 0; height: 29px; padding-left: 6px; font-size: 13.500px; font-weight: 700; line-height: 31px; color: #2e3436; }
.h2 { height: 29px; line-height: 32px; margin-top: -4px; }
.row { display: flex; align-items: center; height: 34px; margin-bottom: 4px; padding-left: 14px; }
.row label { width: 149px; flex: none; white-space: nowrap; font-size: 14.500px; }
.spin { width: 120px; height: 34px; border: 1px solid #cfccc7; border-radius: 5px; background: #fff; display: flex; align-items: center; }
.spin span { flex: 1; padding-left: 7px; color: #1b1f20; }
.entry { width: 168px; height: 34px; border: 1px solid #cfccc7; border-radius: 5px; padding-left: 8px; line-height: 32px; color: #1b1f20; }
.setup { margin: 2px 0 0 6px; width: 122px; height: 33px; border: 1px solid #c4c1bc; border-radius: 5px; background: #f5f4f2; box-shadow: 0 1px 1px #bbb; padding: 2px; }
.setup span { display: block; height: 27px; border: 1px dotted #9a9a9a; text-align: center; line-height: 25px; font-size: 14.200px; }
.preview { flex: 1; background: #fff; padding: 12px 5px 0 4px; display: flex; flex-direction: column; }
.darkbox { width: 660px; height: 60px; background: #2e3436; margin-left: 6px; flex: none; }
.ptext { display: flex; align-items: center; margin-top: 9px; }
.ptext label { width: 87px; flex: none; font-size: 14.200px; }
.pentry { flex: 1; height: 34px; border: 1px solid #cfccc7; border-radius: 5px; line-height: 32px; padding-left: 8px; color: #1b1f20; }

/* right commands */
.cmds { width: 51px; display: flex; flex-direction: column; align-items: center; flex: none; padding-top: 13px; }
.c { width: 16px; height: 16px; margin-bottom: 21px; flex: none; }
.chs { width: 36px; height: 1px; background: #dcdad6; flex: none; margin: -7px 0 10px; }
.cmds .more { margin: -11px 0 0 0; }

/* palette */
.palette { height: 33px; display: flex; flex: none; background: #f5f4f2; }
.none { width: 35px; background: #fff; flex: none; padding: 0 1px; }
.none svg { display: block; width: 33px; height: 33px; }
.big { width: 33px; margin-right: 1px; border: 1px solid #e6e4e0; flex: none; }
.swatches { width: 1716px; display: grid; grid-template-rows: 1fr 1fr; grid-template-columns: repeat(11, 21px) repeat(12, 20.400px) repeat(58, 1fr); grid-auto-flow: column; gap: 1px; flex: none; }
.swatches i { display: block; min-width: 0; }
.palctl { flex: 1; display: flex; align-items: center; padding-left: 3px; gap: 7px; }
.palctl svg { width: 16px; height: 16px; }

/* status */
.status { height: 44px; display: flex; align-items: center; flex: none; font-size: 14.400px; padding-top: 2px; }
.fs { width: 163px; display: grid; grid-template-columns: 44px 92px 27px; row-gap: 1px; line-height: 19px; flex: none; }
.fl { text-align: right; }
.fv { padding-left: 31px; }
.ol { width: 19px; flex: none; }
.tf.op { width: 73px; height: 40px; }
.layerbar { width: 3px; height: 21px; background: #6d9bcd; margin: 0 5px 0 12px; flex: none; }
.layer { width: 67px; flex: none; }
.eye { width: 16px; height: 16px; flex: none; }
.slock { width: 16px; height: 16px; margin-left: 22px; flex: none; }
.st { height: 30px; margin-left: 9px; margin-right: 6px; }
.msg { width: 704px; white-space: nowrap; flex: none; }
.st2 { height: 30px; margin-left: 473px; flex: none; }
.coords { width: 80px; margin-left: 7px; display: grid; grid-template-columns: 26px 50px; line-height: 19px; flex: none; }
.cv { color: #2e3436; }
.zl { width: 16px; flex: none; }
.sf { height: 40px; border: 1px solid #cfccc7; border-radius: 5px; background: #fff; display: flex; align-items: center; flex: none; }
.sf span { flex: 1; text-align: center; color: #1b1f20; padding-left: 8px; }
.sf.z { width: 90px; }
.sf.r { width: 98px; }
.rl { width: 16px; margin-left: 11px; flex: none; }
```
